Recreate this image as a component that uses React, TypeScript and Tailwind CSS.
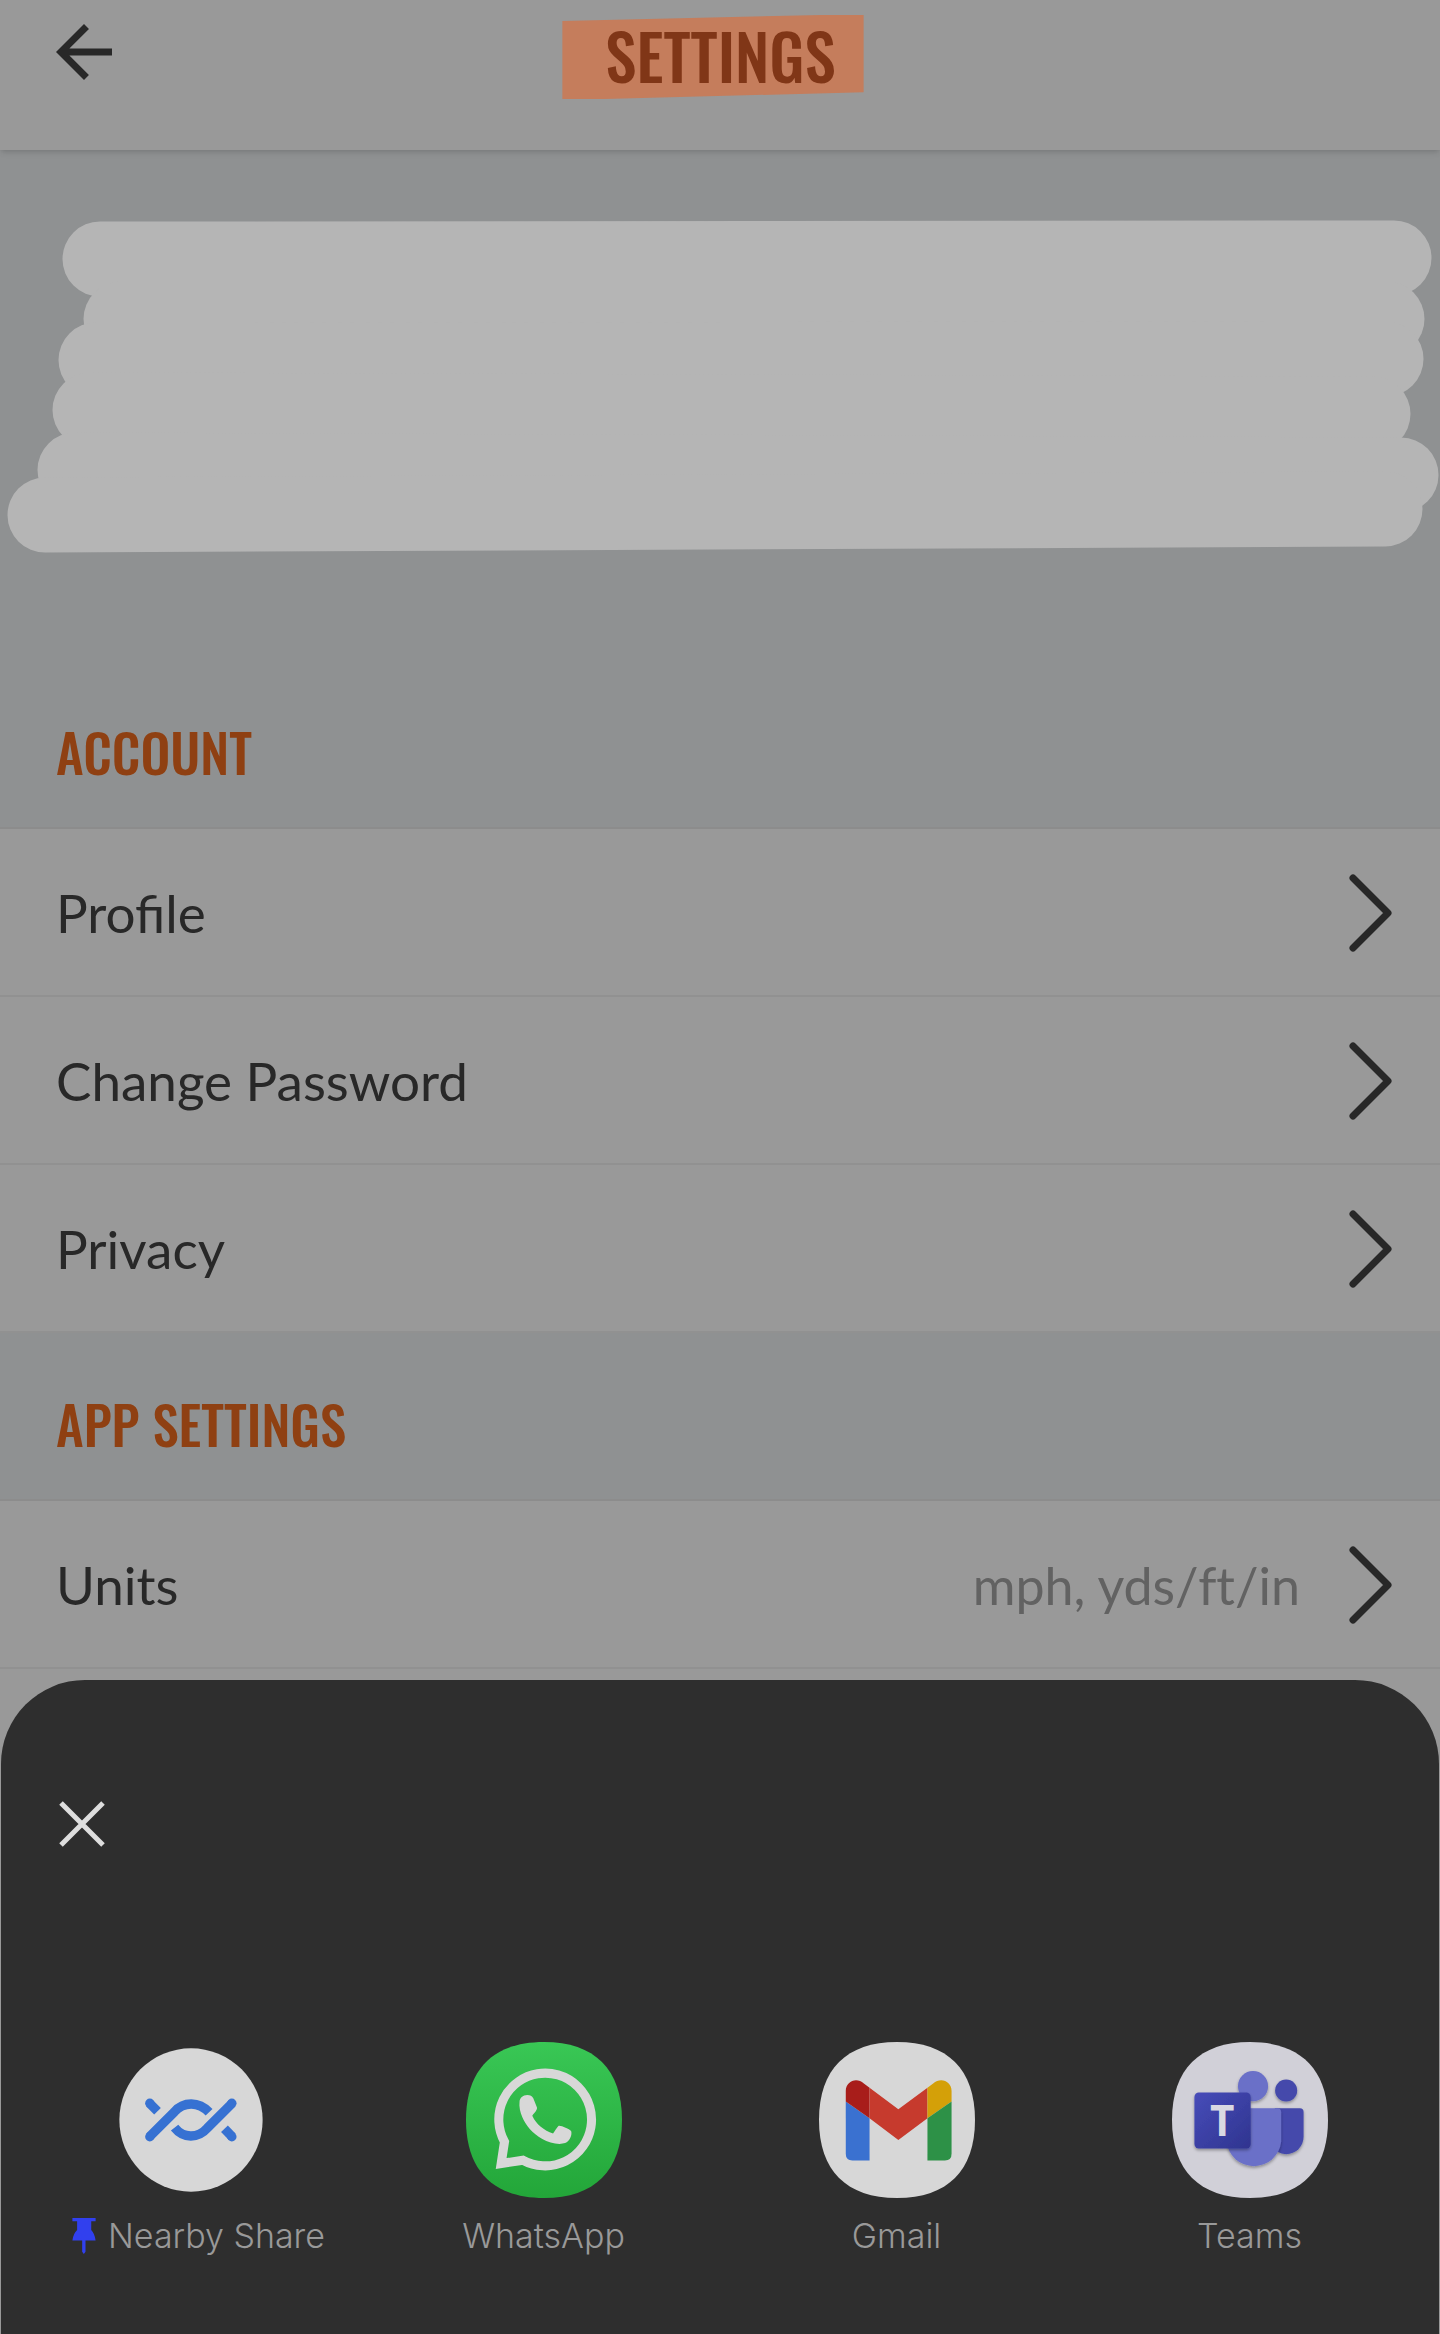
import type { ReactNode } from "react";

const heading = "font-['Oswald',sans-serif] font-medium";

const accountRows = [{ label: "Profile" }, { label: "Change Password" }, { label: "Privacy" }];
const appRows = [{ label: "Units", value: "mph, yds/ft/in" }];

function BackIcon() {
  return (
    <svg viewBox="0 0 24 24" className="h-[84px] w-[84px]" fill="#282828" aria-hidden="true">
      <path d="M20 11H7.83l5.59-5.59L12 4l-8 8 8 8 1.41-1.41L7.83 13H20v-2z" />
    </svg>
  );
}

function ChevronIcon() {
  return (
    <svg viewBox="0 0 44 80" className="h-20 w-11 shrink-0" fill="none" aria-hidden="true">
      <path d="M5 5l35 35L5 75" stroke="#282828" strokeWidth="7" strokeLinecap="round" strokeLinejoin="round" />
    </svg>
  );
}

function PinIcon() {
  return (
    <svg viewBox="68 605 69 107" className="h-9 w-6" fill="#3140ee" aria-hidden="true">
      <path d="M68 605h69v10h-13v26q10 10 13 31h-30v33l-5 7-5-7v-33H68q3-21 14-31v-26H68z" />
    </svg>
  );
}

/* Six overlapping marker strokes that hide the user's details */
function HiddenDetails() {
  return (
    <svg viewBox="0 0 1440 340" className="h-auto w-full" aria-hidden="true">
      <g stroke="#b5b5b5" strokeWidth="75" strokeLinecap="round">
        <path d="M100 40L1394 39" />
        <path d="M121 100H1387" />
        <path d="M96 141L1386 140" />
        <path d="M90 191L1373 195" />
        <path d="M75 251L1401 256" />
        <path d="M45 296L1385 290" />
      </g>
    </svg>
  );
}

function Squircle({ viewBox, x, y, fill, children }: { viewBox: string; x: number; y: number; fill: string; children: ReactNode }) {
  return (
    <svg viewBox={viewBox} className="h-[156px] w-[156px]" aria-hidden="true">
      <path
        transform={`translate(${x} ${y})`}
        fill={fill}
        d="M0 233C0 82 82 0 233 0S466 82 466 233 384 466 233 466 0 384 0 233Z"
      />
      {children}
    </svg>
  );
}

function NearbyShareIcon() {
  return (
    <svg viewBox="187 69 466 466" className="h-[156px] w-[156px]" aria-hidden="true">
      <circle cx="420" cy="302" r="214" fill="#d7d7d7" />
      <g fill="none" stroke="#3671d2" strokeWidth="28">
        <path d="M296 352L370 278C398 246 443 246 474 279" />
        <path d="M543 252L469 326C441 358 397 358 371 325" />
        <path d="M296 252L320 276" />
        <path d="M543 352L520 328" />
      </g>
      <g fill="#3671d2">
        <circle cx="297" cy="252" r="14" />
        <circle cx="297" cy="352" r="14" />
        <circle cx="542" cy="252" r="14" />
        <circle cx="542" cy="352" r="14" />
      </g>
    </svg>
  );
}

function WhatsAppIcon() {
  return (
    <Squircle viewBox="102 68 466 466" x={102} y={68} fill="url(#whatsapp)">
      <defs>
        <linearGradient id="whatsapp" x1="0" y1="0" x2="0" y2="1">
          <stop offset="0" stopColor="#39c755" />
          <stop offset="1" stopColor="#23a639" />
        </linearGradient>
      </defs>
      <path
        d="M272 421A138.500 138.500 0 1 0 217 366L207 431Z"
        fill="none"
        stroke="#d8d8d8"
        strokeWidth="27"
      />
      <path
        d="M262 246C262 236 272 226 285 226C294 226 299 228 303 236L314 264C316 270 306 281 300 288C312 314 335 332 362 341C368 334 372 325 378 319C384 316 410 328 416 334C420 345 412 365 398 370C380 376 350 370 330 358C300 341 280 316 270 292C264 278 260 262 262 246Z"
        fill="#d8d8d8"
      />
    </Squircle>
  );
}

function GmailIcon() {
  return (
    <Squircle viewBox="84 68 466 466" x={84} y={68} fill="#d7d7d7">
      <path d="M164 246L235 296V422H184Q164 422 164 402Z" fill="#3a71d0" />
      <path d="M164 246V214C164 186 196 172 218 192L235 205V296Z" fill="#a81d1a" />
      <path d="M235 205L321 269L408 205V296L321 361L235 296Z" fill="#c63a2d" />
      <path d="M408 205L425 192C448 172 480 186 480 214V246L408 296Z" fill="#d4a008" />
      <path d="M408 296L480 246V402Q480 422 460 422H408Z" fill="#2d9147" />
    </Squircle>
  );
}

function TeamsIcon() {
  return (
    <Squircle viewBox="93 68 466 466" x={93} y={68} fill="#d1d0d8">
      <defs>
        <linearGradient id="teams" x1="0" y1="0" x2="1" y2="1">
          <stop offset="0" stopColor="#474cb9" />
          <stop offset="1" stopColor="#2f348f" />
        </linearGradient>
        <filter id="teams-shadow" x="-20%" y="-20%" width="140%" height="140%">
          <feDropShadow dx="0" dy="5" stdDeviation="5" floodOpacity="0.35" />
        </filter>
      </defs>
      <g filter="url(#teams-shadow)">
        <circle cx="434" cy="213" r="33" fill="#444aab" />
        <path d="M400 266H475Q486 266 486 277V352A52 51 0 0 1 434 403Q420 403 408 396Z" fill="#444aab" />
      </g>
      <g filter="url(#teams-shadow)" fill="#6a6fc8">
        <circle cx="335" cy="200" r="45" />
        <path d="M256 266H407Q419 266 419 278V366A82 82 0 0 1 256 366Z" />
      </g>
      <rect x="160" y="219" width="168" height="167" rx="13" fill="url(#teams)" filter="url(#teams-shadow)" />
      <text x="243" y="348" textAnchor="middle" className="font-['Open_Sans',sans-serif] text-[126px] font-bold" fill="#d9d9e2">
        T
      </text>
    </Squircle>
  );
}

function SettingsRow({ label, value }: { label: string; value?: string }) {
  return (
    <li className="border-b-2 border-[#919191]">
      <button type="button" className="flex h-[166px] w-full items-center pt-px pr-12 pl-14 text-left text-[53px]">
        <span className="flex-1 text-[#282828]">{label}</span>
        {value && <span className="mr-12 text-[52px] text-[#626262] [font-variant-ligatures:none]">{value}</span>}
        <ChevronIcon />
      </button>
    </li>
  );
}

function SectionTitle({ children }: { children: ReactNode }) {
  return (
    <h2 className={`flex h-[168px] items-center border-b-2 border-[#8c8c8c] pt-4 pl-14 text-[53px] text-[#8f4012] ${heading}`}>
      {children}
    </h2>
  );
}

function ShareTarget({ icon, label, pinned }: { icon: ReactNode; label: string; pinned?: boolean }) {
  return (
    <li>
      <button type="button" className="flex w-full flex-col items-center">
        {icon}
        {pinned ? (
          <span className="mt-[14px] ml-4 flex items-center gap-3">
            <PinIcon />
            {label}
          </span>
        ) : (
          <span className="mt-[14px]">{label}</span>
        )}
      </button>
    </li>
  );
}

export default function App() {
  return (
    <div className="flex min-h-screen flex-col bg-[#8f9192] font-['Lato',sans-serif]">
      <header className="grid h-[150px] grid-cols-[1fr_auto_1fr] items-start bg-[#999999] pr-[14px] shadow-md">
        <button type="button" aria-label="Back" className="mt-[10px] ml-[42px] justify-self-start">
          <BackIcon />
        </button>
        <h1
          className={`mt-[15px] flex h-[84px] items-center bg-[#c57d5c] pr-7 pb-1 pl-[43px] text-[63px] text-[#803617] [clip-path:polygon(0_7%,86%_0,100%_0,100%_92%,14%_100%,0_100%)] ${heading}`}
        >
          SETTINGS
        </h1>
      </header>

      <main>
        {/* Profile summary */}
        <section aria-label="Profile details" className="pt-[69px] pb-[102px]">
          <HiddenDetails />
        </section>

        <section>
          <SectionTitle>ACCOUNT</SectionTitle>
          <ul className="bg-[#999999]">
            {accountRows.map((row) => (
              <SettingsRow key={row.label} {...row} />
            ))}
          </ul>
        </section>

        <section>
          <SectionTitle>APP SETTINGS</SectionTitle>
          <ul className="bg-[#999999]">
            {appRows.map((row) => (
              <SettingsRow key={row.label} {...row} />
            ))}
          </ul>
        </section>
      </main>

      {/* Share sheet */}
      <div className="flex flex-1 flex-col bg-[#999999] px-px pt-[11px]">
        <section aria-label="Share" className="flex-1 rounded-t-[84px] bg-[#2e2e2e] px-[13px] pt-[119px]">
          <button type="button" aria-label="Close" className="ml-[43px] block">
            <svg viewBox="0 0 50 50" className="h-[50px] w-[50px]" aria-hidden="true">
              <path d="M4 4l42 42M46 4L4 46" stroke="#dedede" strokeWidth="5" />
            </svg>
          </button>
          <ul className="mt-[193px] grid grid-cols-4 font-['Inter',sans-serif] text-[34px] leading-[48px] font-light text-[#999999]">
            <ShareTarget icon={<NearbyShareIcon />} label="Nearby Share" pinned />
            <ShareTarget icon={<WhatsAppIcon />} label="WhatsApp" />
            <ShareTarget icon={<GmailIcon />} label="Gmail" />
            <ShareTarget icon={<TeamsIcon />} label="Teams" />
          </ul>
        </section>
      </div>
    </div>
  );
}
